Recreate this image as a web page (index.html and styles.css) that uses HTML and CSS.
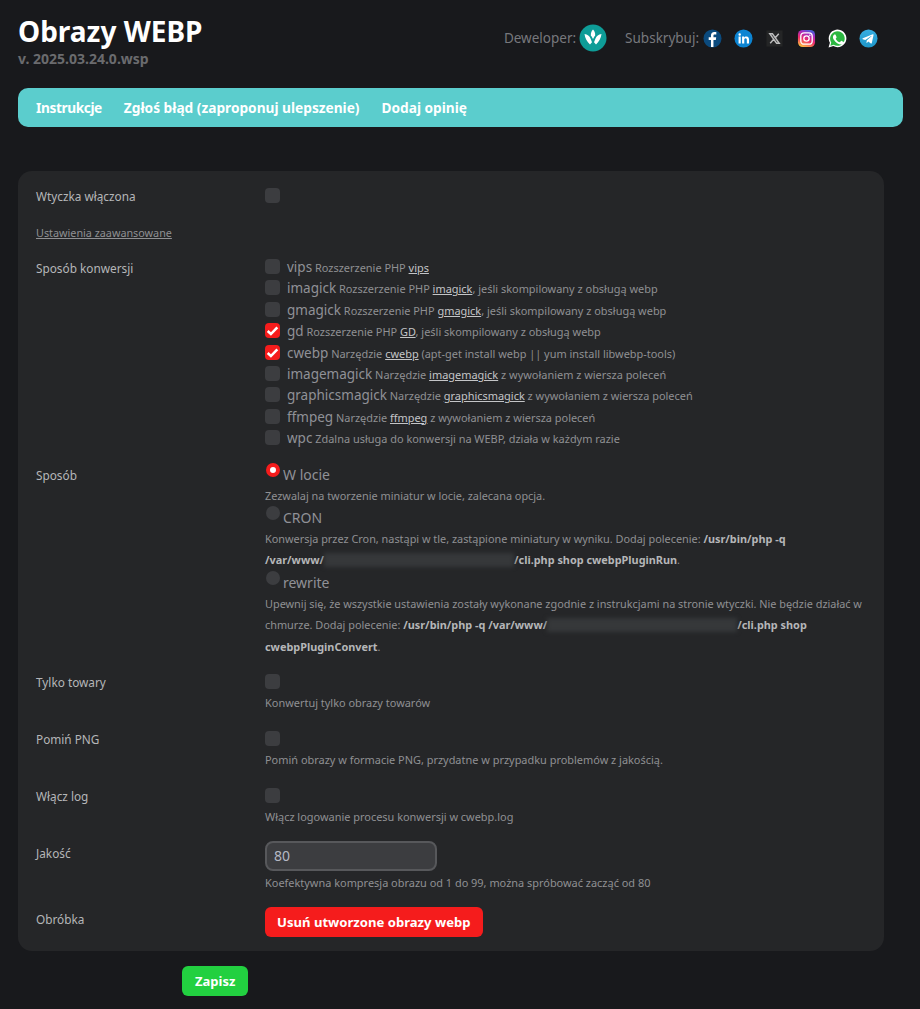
FILE: index.html
```html
<!DOCTYPE html>
<html lang="pl">
<head>
    <meta charset="UTF-8">
    <meta name="viewport" content="width=device-width, initial-scale=1.0">
    <title>Obrazy WEBP</title>
    <link rel="stylesheet" href="styles.css">
</head>
<body>
    <header class="page-head">
        <div class="head-title">
            <h1>Obrazy WEBP</h1>
            <div class="version">v. 2025.03.24.0.wsp</div>
        </div>
        <div class="head-links">
            <span class="head-label">Deweloper:</span>
            <svg class="dev-logo" viewBox="0 0 28 28" width="28" height="28">
                <circle cx="14" cy="14" r="13.5" fill="#0e9c97"/>
                <path d="M5.500 10c3 .5 5 2 6 4.500l1.500 3.700-2 2.300C8 17.700 6 14 5.500 10z" fill="#fff"/>
                <path d="M22.500 10c-3 .5-5 2-6 4.500L15 18.200l2 2.300c3-2.800 5-6.500 5.500-10.500z" fill="#fff"/>
                <path d="M14 5.500c1.600 1.800 2.400 3.700 2.100 5.700L14 15l-2.100-3.800c-.3-2 .5-3.900 2.100-5.700z" fill="#fff"/>
            </svg>
            <span class="head-label subscribe">Subskrybuj:</span>
            <div class="socials">
                <svg viewBox="0 0 20 20" width="19" height="19">
                    <circle cx="10" cy="10" r="9.500" fill="#0b4a7d"/>
                    <path d="M11 19v-7.500h2.500l.4-2.800H11V7c0-.8.3-1.300 1.400-1.300H14V3.200c-.4 0-1.200-.1-2.100-.1-2.100 0-3.500 1.300-3.500 3.600v2H6v2.800h2.400V19z" fill="#fff"/>
                </svg>
                <svg viewBox="0 0 20 20" width="19" height="19">
                    <circle cx="10" cy="10" r="9.500" fill="#0c84d2"/>
                    <path d="M4.800 8h2.300v7.200H4.800zM6 4.500a1.300 1.300 0 1 1 0 2.600 1.300 1.300 0 0 1 0-2.600zM8.500 8h2.200v1c.4-.7 1.200-1.200 2.300-1.200 2.300 0 2.800 1.500 2.800 3.500v3.900h-2.300v-3.500c0-.9 0-2-1.200-2s-1.500.9-1.500 1.900v3.600H8.500z" fill="#fff"/>
                </svg>
                <svg viewBox="0 0 20 20" width="19" height="19">
                    <rect x="1.500" y="1.500" width="17" height="17" fill="#242526"/>
                    <path d="M5 5h2.800l7.200 10h-2.800zM14.500 5l-3.900 4.400M9.300 10.600 5.500 15" fill="none" stroke="#bdbdbd" stroke-width="1.500"/>
                </svg>
                <svg viewBox="0 0 20 20" width="19" height="19">
                    <defs>
                        <linearGradient id="ig" x1="0.200" y1="1" x2="0.600" y2="0">
                            <stop offset="0" stop-color="#fdc83a"/>
                            <stop offset="0.450" stop-color="#ee2a6b"/>
                            <stop offset="0.800" stop-color="#a32cc4"/>
                            <stop offset="1" stop-color="#4f5bd5"/>
                        </linearGradient>
                    </defs>
                    <rect x="1" y="1" width="18" height="18" rx="5" fill="url(#ig)"/>
                    <rect x="4" y="4" width="12" height="12" rx="3.500" fill="none" stroke="#fff" stroke-width="1.400"/>
                    <circle cx="10" cy="10" r="2.800" fill="none" stroke="#fff" stroke-width="1.400"/>
                    <circle cx="13.500" cy="6.500" r="0.800" fill="#fff"/>
                </svg>
                <svg viewBox="0 0 20 20" width="19" height="19">
                    <path d="M.6 19.500l1.400-5A9.300 9.300 0 1 1 5.600 18z" fill="#fff"/>
                    <path d="M2.500 17.500l.9-3.300A7.700 7.700 0 1 1 6 16.700z" fill="#2bb741"/>
                    <path d="M7.200 5.800c-.3 0-.7.100-1 .5-.4.400-1 1.100-1 2.300 0 1.400 1 2.800 1.200 3 .1.200 2 3.100 4.900 4.300 2 .8 2.800.7 3.400.5.700-.1 1.700-.7 1.900-1.400.2-.7.200-1.200.1-1.300l-2.300-1.200c-.3-.1-.5-.1-.7.100l-1 1.200c-.2.200-.4.200-.7.100-1.700-.7-2.900-1.900-3.800-3.400-.1-.3 0-.4.100-.5l.7-1c.1-.2.100-.4 0-.6L8.100 6.200c-.2-.4-.5-.4-.9-.4z" fill="#fff"/>
                </svg>
                <svg viewBox="0 0 20 20" width="19" height="19">
                    <defs>
                        <linearGradient id="tg" x1="0.500" y1="0" x2="0.500" y2="1">
                            <stop offset="0" stop-color="#37aee2"/>
                            <stop offset="1" stop-color="#1e96c8"/>
                        </linearGradient>
                    </defs>
                    <circle cx="10" cy="10" r="9.500" fill="url(#tg)"/>
                    <path d="M4 9.800l10.500-4.300c.5-.2 1 .1.800.9l-1.800 8.400c-.1.600-.5.700-1 .4l-2.700-2-1.300 1.300c-.2.200-.3.300-.6.300l.2-2.800 5-4.500c.2-.2 0-.3-.3-.1L6.600 11.700 4 10.900c-.6-.2-.6-.6 0-1.100z" fill="#fff"/>
                </svg>
            </div>
        </div>
    </header>

    <nav class="tabs">
        <a class="tab-first" href="#">Instrukcje</a>
        <a href="#">Zgłoś błąd (zaproponuj ulepszenie)</a>
        <a href="#">Dodaj opinię</a>
    </nav>

    <form class="settings">
        <div class="field">
            <div class="field-name">Wtyczka włączona</div>
            <div class="field-value"><span class="check"></span></div>
        </div>
        <div class="advanced"><a href="#">Ustawienia zaawansowane</a></div>
        <div class="field field-methods">
            <div class="field-name">Sposób konwersji</div>
            <div class="field-value">
                <div class="method"><span class="check"></span><b>vips</b> Rozszerzenie PHP <a href="#">vips</a></div>
                <div class="method"><span class="check"></span><b>imagick</b> Rozszerzenie PHP <a href="#">imagick</a>, jeśli skompilowany z obsługą webp</div>
                <div class="method"><span class="check"></span><b>gmagick</b> Rozszerzenie PHP <a href="#">gmagick</a>, jeśli skompilowany z obsługą webp</div>
                <div class="method"><span class="check checked"><svg viewBox="0 0 14 14"><path d="M2.500 7.500l3 2.800 6-6.300" fill="none" stroke="#fff" stroke-width="2.400"/></svg></span><b>gd</b> Rozszerzenie PHP <a href="#">GD</a>, jeśli skompilowany z obsługą webp</div>
                <div class="method"><span class="check checked"><svg viewBox="0 0 14 14"><path d="M2.500 7.500l3 2.800 6-6.300" fill="none" stroke="#fff" stroke-width="2.400"/></svg></span><b>cwebp</b> Narzędzie <a href="#">cwebp</a> (apt-get install webp || yum install libwebp-tools)</div>
                <div class="method"><span class="check"></span><b>imagemagick</b> Narzędzie <a href="#">imagemagick</a> z wywołaniem z wiersza poleceń</div>
                <div class="method"><span class="check"></span><b>graphicsmagick</b> Narzędzie <a href="#">graphicsmagick</a> z wywołaniem z wiersza poleceń</div>
                <div class="method"><span class="check"></span><b>ffmpeg</b> Narzędzie <a href="#">ffmpeg</a> z wywołaniem z wiersza poleceń</div>
                <div class="method"><span class="check"></span><b>wpc</b> Zdalna usługa do konwersji na WEBP, działa w każdym razie</div>
            </div>
        </div>
        <div class="field field-mode">
            <div class="field-name">Sposób</div>
            <div class="field-value">
                <div class="radio-row"><span class="radio on"></span>W locie</div>
                <p class="hint">Zezwalaj na tworzenie miniatur w locie, zalecana opcja.</p>
                <div class="radio-row"><span class="radio"></span>CRON</div>
                <p class="hint">Konwersja przez Cron, nastąpi w tle, zastąpione miniatury w wyniku. Dodaj polecenie: <strong>/usr/bin/php -q <span class="nobr">/var/www/<span class="hidden-path"></span>/cli.php</span> shop cwebpPluginRun</strong>.</p>
                <div class="radio-row"><span class="radio"></span>rewrite</div>
                <p class="hint">Upewnij się, że wszystkie ustawienia zostały wykonane zgodnie z instrukcjami na stronie wtyczki. Nie będzie działać w chmurze. Dodaj polecenie: <strong>/usr/bin/php -q <span class="nobr">/var/www/<span class="hidden-path"></span>/cli.php</span> shop cwebpPluginConvert</strong>.</p>
            </div>
        </div>
        <div class="field field-option">
            <div class="field-name">Tylko towary</div>
            <div class="field-value"><span class="check"></span><p class="note">Konwertuj tylko obrazy towarów</p></div>
        </div>
        <div class="field field-option">
            <div class="field-name">Pomiń PNG</div>
            <div class="field-value"><span class="check"></span><p class="note">Pomiń obrazy w formacie PNG, przydatne w przypadku problemów z jakością.</p></div>
        </div>
        <div class="field field-option">
            <div class="field-name">Włącz log</div>
            <div class="field-value"><span class="check"></span><p class="note">Włącz logowanie procesu konwersji w cwebp.log</p></div>
        </div>
        <div class="field field-quality">
            <div class="field-name">Jakość</div>
            <div class="field-value"><input class="num-input" type="text" value="80"><p class="note">Koefektywna kompresja obrazu od 1 do 99, można spróbować zacząć od 80</p></div>
        </div>
        <div class="field field-clean">
            <div class="field-name">Obróbka</div>
            <div class="field-value"><button class="btn btn-red" type="button">Usuń utworzone obrazy webp</button></div>
        </div>
    </form>

    <div class="save-row"><button class="btn btn-green" type="button">Zapisz</button></div>
</body>
</html>
```

FILE: styles.css
```css
* {
    box-sizing: border-box;
}

body {
    margin: 0;
    padding: 0 17px 10px 18px;
    background: #18191c;
    color: #b5b6b8;
    font-family: "Noto Sans", "Open Sans", sans-serif;
    font-size: 11.800px;
}

a {
    color: inherit;
}

/* header */

.page-head {
    display: flex;
    justify-content: space-between;
    height: 88px;
    padding-top: 12px;
}
.page-head h1 {
    margin: 0;
    color: #fff;
    font-size: 28px;
    line-height: 38px;
    font-weight: 700;
}
.version {
    color: #6a6b6e;
    font-size: 14px;
    font-weight: 700;
    line-height: 18px;
}
.head-links {
    display: flex;
    align-items: center;
    height: 28px;
    margin-top: 12px;
    padding-right: 25px;
    color: #77787c;
    font-size: 13.500px;
}
.dev-logo {
    margin-left: 3px;
}
.subscribe {
    margin-left: 18px;
}
.socials {
    display: flex;
    gap: 12.200px;
    margin-left: 4px;
}

/* tabs */

.tabs {
    display: flex;
    gap: 22px;
    height: 39px;
    align-items: center;
    padding: 0 18px;
    background: #5bcdcd;
    border-radius: 10px;
}
.tabs a {
    color: #fff;
    font-size: 13.700px;
    font-weight: 700;
    text-decoration: none;
}
.tabs .tab-first {
    letter-spacing: -0.400px;
}

/* settings card */

.settings {
    width: 866px;
    height: 780px;
    margin-top: 44px;
    padding: 17px 18px;
    background: #252628;
    border-radius: 14px;
}
.field {
    display: flex;
}
.field-name {
    width: 229px;
    flex: none;
    line-height: 16px;
    color: #b5b6b8;
}
.field-value {
    flex: 1;
    min-width: 0;
}
.check {
    display: inline-block;
    width: 15px;
    height: 15px;
    background: #3c3d40;
    border-radius: 4px;
    vertical-align: top;
}
.check.checked {
    background: #f51c1c;
}
.check svg {
    display: block;
}
.advanced {
    margin-top: 21px;
    font-size: 10.800px;
    line-height: 16px;
    color: #8f9093;
}
.field-methods {
    margin-top: 17px;
}
.field-methods .field-name {
    padding-top: 2px;
}
.method {
    height: 21.400px;
    line-height: 19px;
    font-size: 10.950px;
    color: #8f9093;
    white-space: nowrap;
}
.method b {
    font-size: 13.500px;
    font-weight: 400;
    color: #909197;
}
.method a {
    color: #c4c5c7;
}
.method .check {
    margin: 1px 7px 0 0;
}

/* mode radios */

.field-mode {
    margin-top: 12px;
    margin-bottom: 17px;
}
.field-mode .field-name {
    padding-top: 4px;
}
.radio-row {
    height: 21px;
    line-height: 24px;
    font-size: 14px;
    color: #909197;
}
.radio {
    display: inline-block;
    width: 14px;
    height: 14px;
    margin: 0 3px 0 1px;
    background: #3c3d40;
    border-radius: 50%;
    vertical-align: 3px;
}
.radio.on {
    background: #fff;
    border: 4px solid #f51c1c;
}
.hint {
    margin: 0;
    font-size: 10.880px;
    line-height: 21.400px;
    color: #8f9093;
    padding-top: 1px;
}
.hint strong {
    color: #b5b6b8;
}
.nobr {
    white-space: nowrap;
}
.hidden-path {
    display: inline-block;
    width: 190px;
    height: 14px;
    background: #36383a;
    filter: blur(2px);
    vertical-align: -3px;
}

/* small options */

.field-option {
    height: 57px;
}
.field-quality {
    height: 66px;
}
.note {
    margin: 0;
    font-size: 10.950px;
    line-height: 16px;
    color: #8f9093;
    padding-top: 5px;
}
.field-quality .note {
    padding-top: 4px;
}
.num-input {
    display: block;
    width: 172px;
    height: 30px;
    margin-top: -4px;
    padding: 0 7px;
    background: #3c3d40;
    border: 2px solid #57585b;
    border-radius: 8px;
    color: #b5b9c4;
    font: 14px "Noto Sans", sans-serif;
}
.btn {
    border: 0;
    color: #fff;
    font-family: inherit;
    font-weight: 700;
    border-radius: 6px;
}
.btn-red {
    height: 30px;
    margin-top: -4px;
    padding: 0 12px;
    font-size: 13.100px;
    background: #f51c1c;
}
.btn-green {
    height: 30px;
    padding: 0 13px;
    font-size: 13px;
    background: #22d040;
}
.save-row {
    margin-top: 15px;
    padding-left: 164px;
}
```
